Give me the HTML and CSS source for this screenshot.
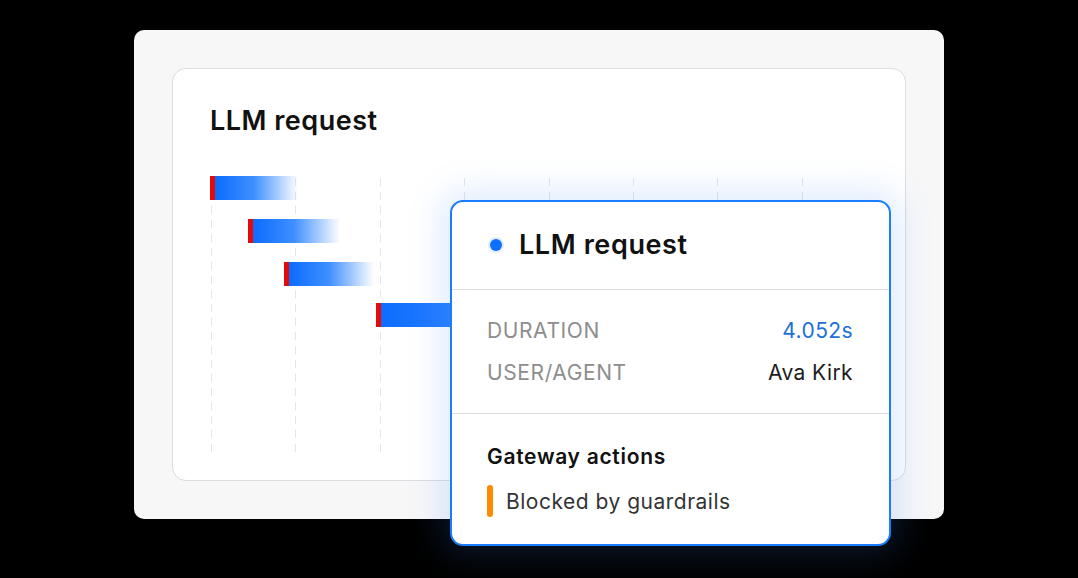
FILE: index.html
```html
<!DOCTYPE html>
<html lang="en">
<head>
<meta charset="utf-8">
<title>LLM request</title>
<link rel="stylesheet" href="styles.css">
</head>
<body>
<div class="stage">
  <div class="outer">
    <div class="panel">
      <h1 class="title">LLM request</h1>
      <div class="chart">
        <div class="grid">
          <span class="gline"></span><span class="gline"></span><span class="gline"></span><span class="gline"></span>
          <span class="gline"></span><span class="gline"></span><span class="gline"></span><span class="gline"></span>
        </div>
        <div class="bars">
          <div class="bar" style="margin-left:0px;width:88px"></div>
          <div class="bar" style="margin-left:38px;width:92px"></div>
          <div class="bar" style="margin-left:74px;width:90px"></div>
          <div class="bar bar-long" style="margin-left:166px;width:300px"></div>
        </div>
      </div>
    </div>

    <div class="popup">
      <div class="pop-head">
        <span class="dot"></span>
        <span class="pop-title">LLM request</span>
      </div>
      <div class="pop-rows">
        <div class="row"><span class="label">DURATION</span><span class="value blue">4.052s</span></div>
        <div class="row"><span class="label">USER/AGENT</span><span class="value">Ava Kirk</span></div>
      </div>
      <div class="pop-actions">
        <div class="actions-title">Gateway actions</div>
        <div class="action"><span class="flag"></span><span class="action-text">Blocked by guardrails</span></div>
      </div>
    </div>
  </div>
</div>
</body>
</html>
```

FILE: styles.css
```css
* { box-sizing: border-box; }
html, body {
  margin: 0;
  padding: 0;
  background: #000;
  width: 1078px;
  height: 578px;
  overflow: hidden;
  font-family: Inter, "Noto Sans", "Liberation Sans", sans-serif;
}
.stage {
  padding: 30px 0 0 134px;
}
.outer {
  position: relative;
  width: 810px;
  height: 489px;
  padding: 38px;
  background: #f7f7f8;
  border-radius: 10px;
}
.panel {
  height: 413px;
  background: #fff;
  border: 1px solid #dcdce1;
  border-radius: 14px;
  padding: 36px 38px 0 37px;
}
.title {
  margin: 0;
  font-size: 27px;
  line-height: 32px;
  font-weight: 600;
  color: #111;
  letter-spacing: 0.5px;
}
.chart {
  margin-top: 39px;
  height: 280px;
  display: grid;
}
.grid, .bars { grid-area: 1 / 1; }
.grid {
  display: flex;
  gap: 83.4px;
  padding: 2px 0 0 1px;
}
.gline {
  width: 1px;
  height: 278px;
  background: repeating-linear-gradient(180deg, #e6e6ea 0 8px, transparent 8px 14px);
}
.bars {
  display: flex;
  flex-direction: column;
  gap: 19px;
}
.bar {
  height: 24px;
  background: linear-gradient(90deg, #e30a0a 0 5px, #0b6cff 5px, #3f8fff 50%, rgba(255,255,255,0) 100%);
}
.bar-long {
  margin-top: -2px;
  background: linear-gradient(90deg, #e30a0a 0 5px, #0b6cff 5px, #3a8aff 40%, rgba(255,255,255,0) 100%);
}
.popup {
  position: absolute;
  left: 316px;
  top: 170px;
  width: 441px;
  height: 346px;
  background: #fff;
  border: 2px solid #1a7cff;
  border-radius: 13px;
  box-shadow: 0 0 34px 8px rgba(60, 140, 255, 0.18);
  overflow: hidden;
}
.pop-head {
  display: flex;
  align-items: center;
  gap: 17px;
  height: 88px;
  padding: 0 35px 2px 38px;
  border-bottom: 1px solid #dcdce1;
}
.dot {
  width: 12px;
  height: 12px;
  border-radius: 50%;
  background: #0f6fff;
  box-shadow: 0 0 0 2px #e2edff;
}
.pop-title {
  font-size: 27px;
  line-height: 34px;
  font-weight: 600;
  color: #111;
  letter-spacing: 0.6px;
}
.pop-rows {
  padding: 19px 36px 20px 35px;
  border-bottom: 1px solid #dcdce1;
}
.row {
  display: flex;
  justify-content: space-between;
  align-items: center;
  height: 42px;
  font-size: 21px;
}
.label {
  color: #8d8d8f;
  letter-spacing: 0.6px;
}
.value {
  color: #1c1c1e;
  letter-spacing: 0.4px;
}
.value.blue {
  color: #1f6fd8;
}
.pop-actions {
  padding: 29px 36px 0 35px;
}
.actions-title {
  font-size: 21px;
  line-height: 28px;
  font-weight: 600;
  color: #111;
  letter-spacing: 0.7px;
}
.action {
  display: flex;
  align-items: center;
  gap: 13px;
  margin-top: 14px;
  height: 32px;
}
.flag {
  width: 6px;
  height: 32px;
  border-radius: 3px;
  background: #ff8a00;
}
.action-text {
  font-size: 21px;
  color: #333336;
  letter-spacing: 0.5px;
}
```
